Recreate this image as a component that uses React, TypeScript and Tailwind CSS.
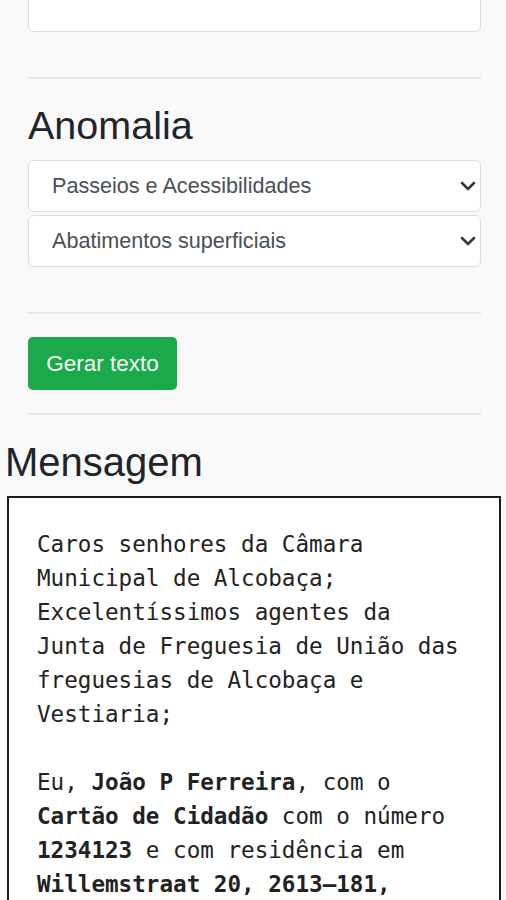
import { useState } from 'react'

const sans = { fontFamily: '"Liberation Sans", Arial, sans-serif' }

function Chevron() {
  return (
    <svg viewBox="0 0 16 16" className="w-4 h-4 absolute right-[5px] top-1/2 -translate-y-1/2 pointer-events-none" fill="none">
      <path d="M2 5l6 6 6-6" stroke="#343a40" strokeWidth="2.6" strokeLinecap="round" strokeLinejoin="round" />
    </svg>
  )
}

function Select({ value, options, onChange }: { value: string; options: string[]; onChange: (v: string) => void }) {
  return (
    <div className="relative">
      <select value={value} onChange={e => onChange(e.target.value)}
        className="appearance-none w-full h-[52px] bg-white border border-[#dcdcdc] rounded-[6px] pl-[23px] pr-10 text-[21.6px] text-[#495057] outline-none"
        style={sans}>
        {options.map(o => <option key={o}>{o}</option>)}
      </select>
      <Chevron />
    </div>
  )
}

const Rule = () => <div className="h-[2px] bg-[#e6e6e6]" />

export default function App() {
  const [categoria, setCategoria] = useState('Passeios e Acessibilidades')
  const [anomalia, setAnomalia] = useState('Abatimentos superficiais')

  return (
    <div className="min-h-screen bg-[#f9f9f9] overflow-hidden text-[#212529]" style={sans}>
      <div className="pl-[28px] pr-[25px]">
        <div className="-mt-[20px] h-[52px] bg-white border border-[#dcdcdc] rounded-[6px]" />
        <div className="mt-[45px]"><Rule /></div>

        <h2 className="mt-[23px] mb-[11px] text-[39.5px] leading-[47px] font-normal">Anomalia</h2>
        <Select value={categoria} onChange={setCategoria}
          options={['Passeios e Acessibilidades', 'Iluminação Pública', 'Espaços Verdes']} />
        <div className="mt-[3px]">
          <Select value={anomalia} onChange={setAnomalia}
            options={['Abatimentos superficiais', 'Buracos', 'Obstruções']} />
        </div>

        <div className="mt-[45px]"><Rule /></div>
        <button className="mt-[23px] w-[149px] h-[53px] rounded-[5px] bg-[#1aa94b] text-[#f4fff6] text-[22.5px]">
          Gerar texto
        </button>
        <div className="mt-[23px]"><Rule /></div>
      </div>

      <div className="pl-[7px] pr-[5px]">
        <h2 className="mt-[24px] mb-[10px] -ml-[2px] text-[40px] leading-[47px] font-normal">Mensagem</h2>
        <div className="bg-white border-2 border-[#1c1c1c] pt-[29px] pl-[28px] pr-[30px] pb-[29px] text-[22.6px] leading-[34px] text-[#222] whitespace-pre-wrap break-words"
          style={{ fontFamily: '"DejaVu Sans Mono", monospace' }}>
          {'Caros senhores da Câmara Municipal de Alcobaça;\nExcelentíssimos agentes da Junta de Freguesia de União das freguesias de Alcobaça e Vestiaria;\n\nEu, '}
          <b>João P Ferreira</b>{', com o '}
          <b>Cartão de Cidadão</b>{' com o número '}
          <b>1234123</b>{' e com residência em '}
          <b>Willemstraat 20, 2613–181, Alcobaça</b>
          {', venho por este meio comunicar uma anomalia do tipo '}
          <b>Abatimentos superficiais</b>{'.'}
        </div>
      </div>
    </div>
  )
}
